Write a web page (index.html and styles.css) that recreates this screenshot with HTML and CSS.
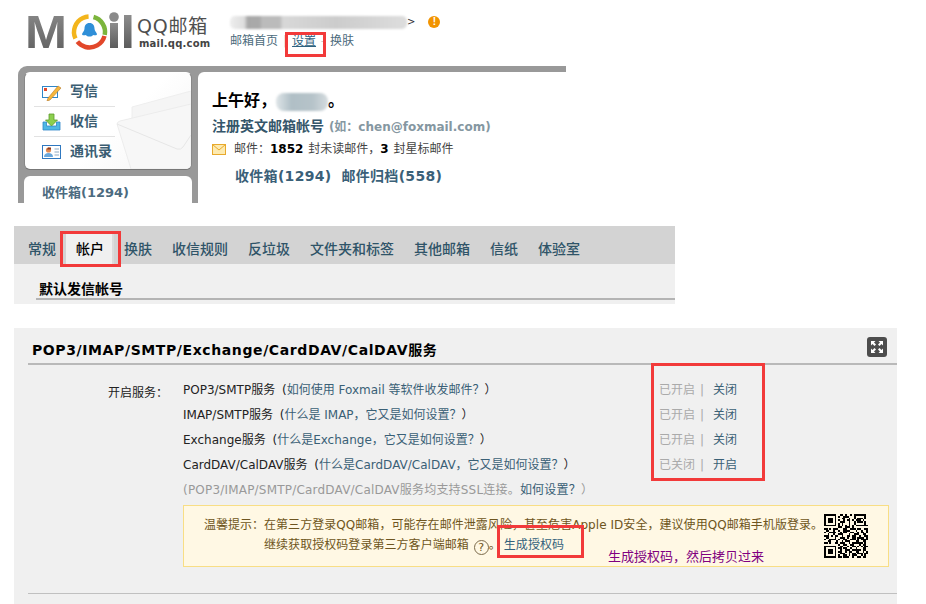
FILE: index.html
```html
<!DOCTYPE html>
<html lang="zh">
<head>
<meta charset="utf-8">
<title>QQ邮箱设置</title>
<link rel="stylesheet" href="styles.css">
</head>
<body>
<div class="canvas">
  <section class="shot-home">
    <header class="top">
      <svg class="logo" width="106" height="50" viewBox="0 0 106 50">
        <defs>
          <linearGradient id="g" x1="0" y1="0" x2="0" y2="1"><stop offset="0" stop-color="#8d8d8d"/><stop offset="1" stop-color="#5c5c5c"/></linearGradient>
        </defs>
        <text class="logo-m" x="-2" y="44" textLength="42" lengthAdjust="spacingAndGlyphs" fill="url(#g)">M</text>
        <circle cx="62.500" cy="28" r="15.500" fill="none" stroke="#f3b51c" stroke-width="4.500" stroke-dasharray="30 100" transform="rotate(155 62.500 28)"/>
        <circle cx="62.500" cy="28" r="15.500" fill="none" stroke="#7cb53c" stroke-width="4.500" stroke-dasharray="23 100" transform="rotate(-75 62.500 28)"/>
        <circle cx="62.500" cy="28" r="15.500" fill="none" stroke="#e2472a" stroke-width="4.500" stroke-dasharray="34 100" transform="rotate(15 62.500 28)"/>
        <path d="M62.500 19c3.500 0 5 2.500 5 5.500 0 2 1.500 3.500 2.500 5.500 0 2-3 1-4 1-1 2-6 2-7 0-1 0-4 1-4-1 1-2 2.500-3.500 2.500-5.500 0-3 1.500-5.500 5-5.500z" fill="#2f8fd8"/>
        <rect x="83" y="19" width="8" height="25" fill="url(#g)"/>
        <circle cx="87" cy="13" r="4.800" fill="#8a8a8a"/>
        <rect x="97" y="11" width="7.500" height="33" fill="url(#g)"/>
      </svg>
      <div class="brand">
        <div class="brand-cn">QQ邮箱</div>
        <div class="brand-en">mail.qq.com</div>
      </div>
      <div class="userbox">
        <div class="user-line">
          <span class="blob-user"></span><span class="gt">&gt;</span>
          <span class="warn">!</span>
        </div>
        <nav class="topnav">
          <a>邮箱首页</a><i>|</i><a class="under">设置</a><i>-</i><a>换肤</a>
        </nav>
      </div>
    </header>
    <div class="panel">
      <aside class="side">
        <div class="card quick">
          <svg class="watermark" width="96" height="70" viewBox="0 0 96 70">
            <path d="M37 8 96 -8V12L37 24z" fill="#f5f5f5" stroke="#eeeeee"/>
            <path d="M22 25Q22 23 25 22L96 5V70H36z" fill="#f7f7f7" stroke="#ececec"/>
            <path d="M22 25 82 50Q86 51 88 48L96 36" fill="none" stroke="#e6e6e6"/>
          </svg>
          <a class="quick-row">
            <svg width="20" height="18" viewBox="0 0 20 18"><rect x=".5" y="3.500" width="15" height="11" fill="#fff" stroke="#2f86c8"/><rect x="2" y="5" width="3" height="3" fill="#e4492a"/><path d="M6 15 16 3l3 2L8 17l-3 1z" fill="#f6b73c" stroke="#b5792a" stroke-width=".6"/></svg>
            写信
          </a>
          <a class="quick-row">
            <svg width="20" height="18" viewBox="0 0 20 18"><path d="M1 9v8h17V9h-3.500v4h-10V9z" fill="#4fb8e4" stroke="#2f86c8" stroke-width=".8"/><path d="M7 1h5v6h3.500L9.500 13 3.500 7H7z" fill="#8ccf4e" stroke="#5d9c2c" stroke-width=".8"/></svg>
            收信
          </a>
          <a class="quick-row">
            <svg width="20" height="18" viewBox="0 0 20 18"><rect x=".5" y="2.500" width="18" height="13" fill="#fff" stroke="#2f78c0"/><circle cx="6.500" cy="7" r="2.600" fill="#e08a52"/><path d="M6 4.500h3v2H5z" fill="#8c3a1e"/><path d="M2 14c0-3 2-4 4.500-4s4.500 1 4.500 4z" fill="#6aa8dc"/><path d="M12.500 6h4.500M12.500 9h4.500M12.500 12h4.500" stroke="#8ea9c2"/></svg>
            通讯录
          </a>
        </div>
        <div class="card inbox">收件箱(1294)</div>
      </aside>
      <main class="welcome">
        <h1 class="hello">上午好，<span class="blob-name"></span>。</h1>
        <p class="reg">注册英文邮箱帐号 <span class="reg-hint">(如：chen@foxmail.com)</span></p>
        <p class="stat">
          <svg width="14" height="11" viewBox="0 0 14 11"><rect x=".5" y=".5" width="13" height="10" fill="#fdeab0" stroke="#e8a92c"/><path d="M.5.5 7 6l6.500-5.500" fill="none" stroke="#e8a92c"/></svg>
          <span class="stat-text">邮件：<b>1852</b> 封未读邮件，<b>3</b> 封星标邮件</span>
        </p>
        <p class="folders"><a>收件箱(1294)</a><a>邮件归档(558)</a></p>
      </main>
    </div>
  </section>

  <section class="shot-tabs">
    <nav class="tabs">
      <a>常规</a><a class="on">帐户</a><a>换肤</a><a>收信规则</a><a>反垃圾</a><a>文件夹和标签</a><a>其他邮箱</a><a>信纸</a><a>体验室</a>
    </nav>
    <div class="tab-body"><h2 class="tab-title">默认发信帐号</h2></div>
  </section>

  <section class="shot-pop">
    <div class="pop-head">
      <h2>POP3/IMAP/SMTP/Exchange/CardDAV/CalDAV服务</h2>
      <span class="expand">
        <svg width="20" height="20" viewBox="0 0 20 20"><path d="M4 4h4.500L7 5.500 9 7.500 7.500 9 5.500 7 4 8.500zM16 4v4.500L14.500 7 12.500 9 11 7.500 13 5.500 11.500 4zM4 16v-4.500L5.500 13 7.500 11 9 12.500 7 14.500 8.500 16zM16 16h-4.500L13 14.500 11 12.500 12.500 11 14.500 13 16 11.500z" fill="#fff"/></svg>
      </span>
    </div>
    <div class="services">
      <div class="svc-label">开启服务：</div>
      <div class="svc-list">
        <div class="svc"><span>POP3/SMTP服务 <i class="open">(</i><a>如何使用 Foxmail 等软件收发邮件？</a>）</span><span class="state"><em>已开启</em><i>|</i><a>关闭</a></span></div>
        <div class="svc"><span>IMAP/SMTP服务 <i class="open">(</i><a>什么是 IMAP，它又是如何设置？</a>）</span><span class="state"><em>已开启</em><i>|</i><a>关闭</a></span></div>
        <div class="svc"><span>Exchange服务 <i class="open">(</i><a>什么是Exchange，它又是如何设置？</a>）</span><span class="state"><em>已开启</em><i>|</i><a>关闭</a></span></div>
        <div class="svc"><span>CardDAV/CalDAV服务 <i class="open">(</i><a>什么是CardDAV/CalDAV，它又是如何设置？</a>）</span><span class="state"><em>已关闭</em><i>|</i><a>开启</a></span></div>
        <div class="svc muted"><span>(POP3/IMAP/SMTP/CardDAV/CalDAV服务均支持SSL连接。<a>如何设置？</a>）</span></div>
      </div>
    </div>
    <div class="notice">
      <div class="notice-label">温馨提示：</div>
      <div class="notice-text">
        <p>在第三方登录QQ邮箱，可能存在邮件泄露风险，甚至危害Apple ID安全，建议使用QQ邮箱手机版登录。</p>
        <p>继续获取授权码登录第三方客户端邮箱 <span class="help">?</span>。<a class="gen">生成授权码</a></p>
      </div>
      <svg class="qr" width="44" height="44" viewBox="0 0 25 25" shape-rendering="crispEdges">
        <path stroke="#000" stroke-width="1" fill="none" d="M0 .5h7m2 0h2m1 0h1m2 0h1m1 0h7M0 1.500h1m5 0h1m1 0h1m2 0h3m3 0h1m5 0h1M0 2.500h1m1 0h3m1 0h1m3 0h2m2 0h1m2 0h1m1 0h3m1 0h1M0 3.500h1m1 0h3m1 0h1m1 0h1m2 0h1m1 0h2m1 0h1m1 0h3m1 0h1M0 4.500h1m1 0h3m1 0h1m2 0h3m2 0h1m2 0h1m1 0h3m1 0h1M0 5.500h1m5 0h1m1 0h1m1 0h1m3 0h1m2 0h1m5 0h1M0 6.500h7m1 0h1m1 0h1m1 0h1m1 0h1m1 0h1m1 0h7M8 7.500h2m2 0h3m1 0h1M0 8.500h2m1 0h1m1 0h3m3 0h2m2 0h3m1 0h2m2 0h3M1 9.500h2m2 0h1m2 0h1m2 0h4m3 0h1m2 0h1m2 0h1M0 10.500h1m2 0h4m2 0h1m1 0h2m2 0h2m2 0h1m1 0h2m1 0h1M2 11.500h1m2 0h1m2 0h3m3 0h1m2 0h3m2 0h2M0 12.500h3m1 0h1m1 0h2m2 0h1m2 0h2m1 0h2m2 0h1m2 0h2M1 13.500h2m3 0h1m2 0h3m1 0h1m2 0h2m1 0h4m1 0h1M0 14.500h1m2 0h4m1 0h1m2 0h2m2 0h3m1 0h1m1 0h4M2 15.500h2m3 0h1m2 0h1m1 0h3m3 0h2m2 0h2M0 16.500h2m1 0h1m2 0h2m1 0h3m2 0h1m1 0h6m1 0h1M8 17.500h1m2 0h2m2 0h2m3 0h1m1 0h2M0 18.500h7m2 0h2m2 0h1m2 0h2m1 0h1m1 0h1m1 0h2M0 19.500h1m5 0h1m1 0h2m1 0h2m2 0h1m2 0h1m3 0h2M0 20.500h1m1 0h3m1 0h1m2 0h1m2 0h3m1 0h5m1 0h2M0 21.500h1m1 0h3m1 0h1m1 0h2m2 0h1m1 0h2m2 0h2m2 0h1m1 0h1M0 22.500h1m1 0h3m1 0h1m2 0h3m2 0h1m1 0h2m1 0h3m1 0h2M0 23.500h1m5 0h1m1 0h1m2 0h2m1 0h1m1 0h3m2 0h1m1 0h1M0 24.500h7m1 0h2m1 0h3m2 0h1m2 0h2m1 0h2"/>
      </svg>
    </div>
    <div class="pop-foot"></div>
  </section>

  <span class="mark mark-nav"></span>
  <span class="mark mark-tab"></span>
  <span class="mark mark-state"></span>
  <span class="mark mark-gen"></span>
  <span class="note">生成授权码，然后拷贝过来</span>
</div>
</body>
</html>
```
FILE: styles.css
```css
* { box-sizing: border-box; }
html, body { margin: 0; padding: 0; background: #fff; }
body { font: 12px/1.4 "DejaVu Sans", "Noto Sans CJK SC", sans-serif; color: #222; }
p, h1, h2 { margin: 0; }
i, em { font-style: normal; }
.canvas { position: relative; width: 926px; height: 604px; overflow: hidden; }

/* first screenshot */
.shot-home { width: 566px; height: 203px; }
.top { display: flex; height: 66px; padding: 11px 0 0 27px; }
.logo { flex: none; width: 106px; height: 50px; margin-top: -7px; overflow: visible; }
.logo-m { font: bold 46px "Liberation Sans", sans-serif; }
.brand { margin: 4px 0 0 4px; width: 93px; }
.brand-cn { font-size: 19px; line-height: 23px; letter-spacing: .8px; color: #4f4f4f; }
.brand-en { margin-left: 2px; font-size: 10px; line-height: 12px; font-weight: bold; letter-spacing: .2px; color: #444; }
.userbox { display: flex; flex-direction: column; }
.user-line { display: flex; align-items: center; height: 18px; margin-top: 2px; }
.blob-user { display: block; width: 177px; height: 13px; border-radius: 5px; filter: blur(1px);
  background: linear-gradient(90deg, #eee 0, #ddd 8%, #a8a8a8 10%, #aaa 17%, #bbb 18%, #bbb 28%, #d8d8d8 30%, #ccc 60%, #ddd 100%); }
.gt { font-size: 10px; color: #333; }
.warn { width: 12px; height: 12px; margin-left: 13px; border-radius: 50%; background: #f29400; color: #fff;
  font: bold 10px/12px "Liberation Sans", sans-serif; text-align: center; }
.topnav { display: flex; margin-top: 2px; color: #4c6b7c; line-height: 17px; }
.topnav i { width: 14px; text-align: center; color: #ccc; }
.under { text-decoration: underline; color: #2f6280; }

.panel { display: flex; gap: 6px; height: 137px; padding: 6px 0 0 6px; margin-left: 18px; background: #999; border-top-left-radius: 9px; overflow: hidden; }
.side { display: flex; flex-direction: column; gap: 6px; width: 168px; flex: none; }
.card { flex: none; background: #fff; border-radius: 6px; }
.quick { position: relative; height: 98px; padding: 4px 0 0 10px; overflow: hidden; border: 1px solid #888; border-color: #fff #888 #777 #888; background: linear-gradient(135deg, #fff 55%, #f3f3f3); }
.watermark { position: absolute; right: 0; bottom: 0; overflow: visible; }
.quick-row { position: relative; display: flex; align-items: center; gap: 8px; width: 81px; height: 30px; margin-left: -1px;
  padding-left: 8px; border-bottom: 1px solid #e2e2e2; white-space: nowrap; font-size: 14px; font-weight: bold; color: #3a5d72; }
.quick-row:last-child { border-bottom: 0; }
.inbox { height: 40px; padding: 8px 0 0 18px; font-size: 13px; line-height: 18px; font-weight: bold; color: #4c6b7f; }
.welcome { flex: 1; padding: 17px 0 0 14px; background: #fff; border-top-left-radius: 6px; }
.hello { position: relative; font-size: 16px; line-height: 24px; font-weight: bold; color: #000; }
.blob-name { display: inline-block; width: 52px; height: 18px; vertical-align: middle; border-radius: 8px; filter: blur(1px);
  background: linear-gradient(90deg, #dfe5e8, #b0bfc6 30%, #b6c3c9 70%, #d5dcdf); }
.reg { margin-top: 3px; font-size: 14px; line-height: 20px; font-weight: bold; color: #35566a; white-space: nowrap; }
.reg-hint { font-size: 12px; color: #8597a1; }
.stat { display: flex; align-items: center; margin-top: 2px; height: 20px; color: #444; white-space: nowrap; }
.stat svg { flex: none; }
.stat-text { margin-left: 8px; }
.stat-text b { color: #000; margin-right: 1px; }
.folders { display: flex; gap: 10px; margin: 7px 0 0 23px; font-size: 14px; font-weight: bold; line-height: 20px; color: #3a6078; letter-spacing: .3px; white-space: nowrap; }

/* second screenshot */
.shot-tabs { width: 661px; height: 78px; margin: 23px 0 0 14px; background: #f0f0f0; }
.tabs { display: flex; height: 38px; padding: 0 0 0 4px; background: #d3d3d3; font-size: 14px; font-weight: 500; color: #2f5468; }
.tabs a { display: flex; align-items: center; height: 38px; padding: 10px 10px 0; }
.tabs .on { height: 32px; margin-top: 6px; padding: 4px 8px 0 10px; color: #000; background: #f0f0f0; border-right: 2px solid #dcdcdc; }
.tab-body { padding: 15px 0 0 22px; }
.tab-title { height: 21px; padding-left: 3px; font-size: 14px; line-height: 20px; font-weight: bold; color: #000; border-bottom: 2px solid #b4b4b4; }

/* third screenshot */
.shot-pop { width: 883px; height: 280px; margin: 24px 0 0 14px; background: #f0f0f0; }
.pop-head { display: flex; justify-content: space-between; align-items: center; height: 37px; margin-left: 14px; padding: 6px 10px 0 4px; border-bottom: 2px solid #b9b9b9; }
.pop-head h2 { margin-top: 4px; font-size: 14px; font-weight: bold; color: #000; letter-spacing: .6px; white-space: nowrap; }
.expand { display: block; width: 20px; height: 20px; border-radius: 3px; background: #4d4d4d; margin-top: -4px; }
.services { display: flex; margin-top: 13px; }
.svc-label { width: 154px; text-align: right; padding-top: 6px; line-height: 18px; }
.svc-list { flex: 1; margin-left: 15px; }
.svc { display: flex; justify-content: space-between; height: 25px; line-height: 25px; color: #222; white-space: nowrap; }
.svc a { color: #3a6076; }
.open { margin-left: 3px; }
.muted, .muted span { color: #999; letter-spacing: .2px; }
.state { display: flex; width: 238px; }
.state em { color: #aaa; }
.state i { width: 18px; text-align: center; margin-left: -2px; color: #aaa; }
.svc .state a { margin-left: 2px; }
.notice { display: flex; margin: 2px 8px 0 169px; height: 62px; padding: 9px 0 0 20px; border: 1px solid #f8de85; background: #fff8e4; color: #6e5520; position: relative; }
.notice-label { width: 60px; line-height: 20px; }
.notice-text { flex: 1; white-space: nowrap; line-height: 20px; letter-spacing: .05px; }
.gen { margin-left: 3px; color: #34627c; }
.help { display: inline-block; width: 15px; height: 15px; margin: 0 0 0 1px; border: 1px solid #7a6a4a; border-radius: 50%; text-align: center; line-height: 13px; font-size: 11px; vertical-align: -2px; }
.qr { flex: none; margin: -1px 20px 0 0; }
.pop-foot { margin: 26px 0 0 14px; border-top: 1px solid #c0c0c0; }

/* hand-drawn markers over the screenshots */
.mark { position: absolute; border: 3px solid #f23a3a; }
.mark-nav { left: 285px; top: 32px; width: 41px; height: 25px; }
.mark-tab { left: 60px; top: 231px; width: 61px; height: 36px; }
.mark-state { left: 651px; top: 363px; width: 114px; height: 118px; }
.mark-gen { left: 497px; top: 525px; width: 87px; height: 33px; }
.note { position: absolute; left: 608px; top: 548px; font-size: 13px; line-height: 18px; color: #800080; white-space: nowrap; }
```
